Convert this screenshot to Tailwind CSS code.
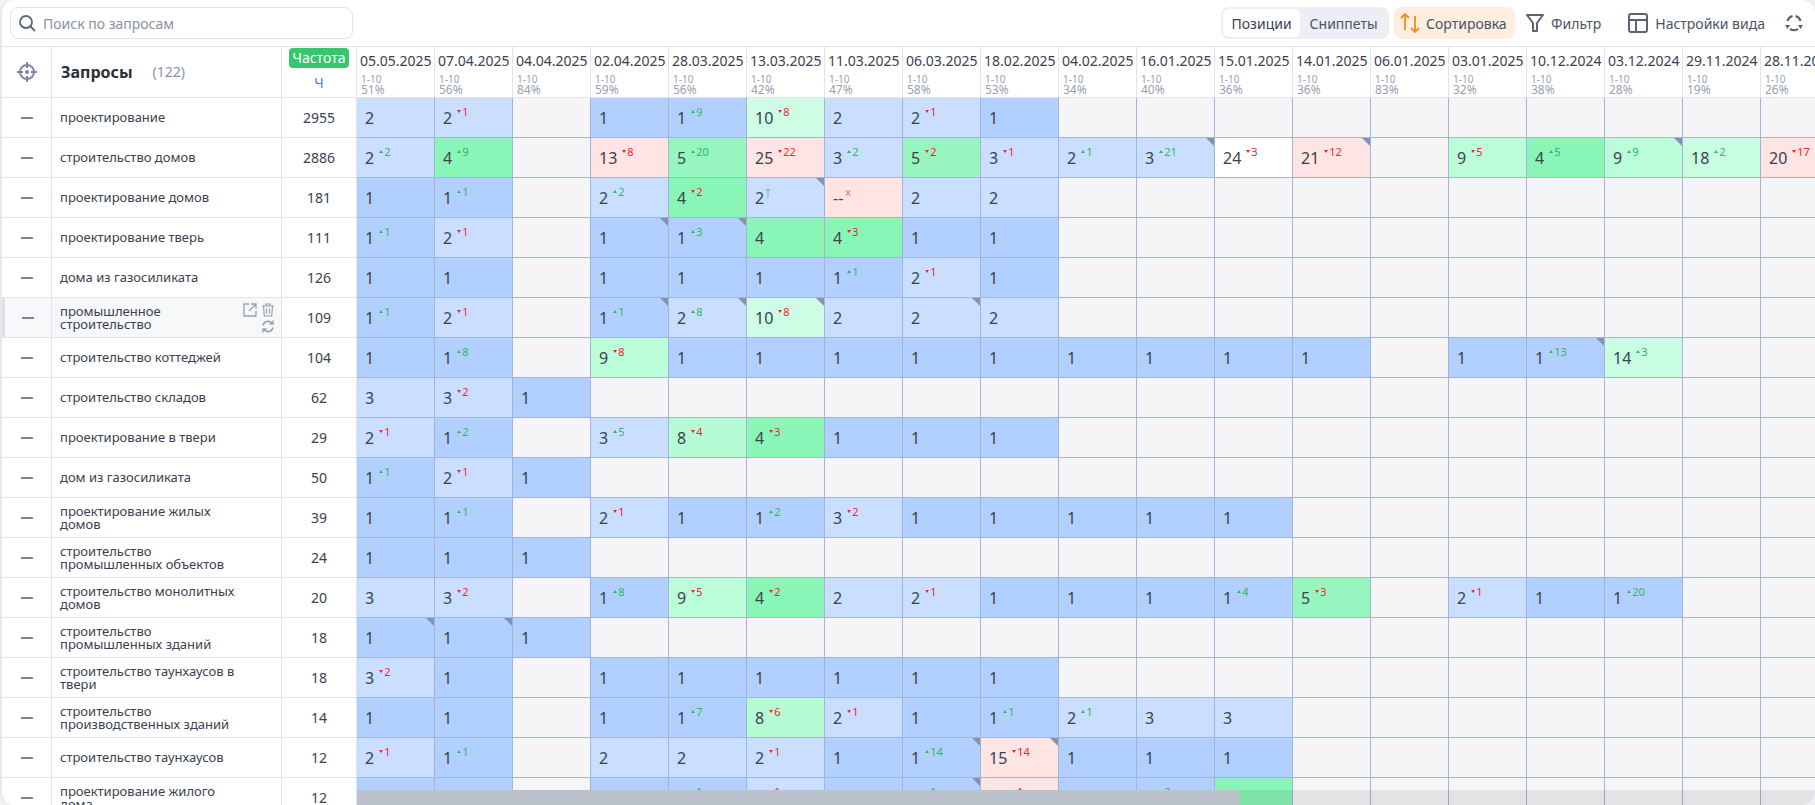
<!DOCTYPE html>
<html lang="ru">
<head>
  <meta charset="UTF-8" />
  <title>Запросы</title>
  <script src="https://cdn.jsdelivr.net/npm/@tailwindcss/browser@4"></script>
</head>
<body class="bg-[#eef0f3] h-[805px] w-[1815px] overflow-hidden font-['Noto_Sans',sans-serif] text-[#3a4150]">
  <div class="relative h-[805px] w-[1815px] overflow-hidden rounded-[14px] bg-white border-l-2 border-[#e6e8ed]">

    <!-- Top bar -->
    <div class="flex h-[46px] items-start pt-[7px] pl-[8px]">
      <div class="flex h-[32px] w-[343px] items-center gap-[6px] rounded-lg border border-[#dfe2e8] px-[7px]">
        <svg width="19" height="19" viewBox="0 0 19 19" fill="none" stroke="#5f6878" stroke-width="1.8"><circle cx="8" cy="8" r="6"/><path d="M12.5 12.5L17 17"/></svg>
        <span class="text-[14px] text-[#8a93a3]">Поиск по запросам</span>
      </div>
      <div class="ml-auto flex items-center pr-[11px]">
        <div class="mr-[1px] flex h-[32px] w-[168px] items-center rounded-lg bg-[#eceef3] p-[2px] text-[14px]">
          <div class="flex h-[28px] w-[77px] items-center justify-center rounded-md bg-white text-[#3a4150]">Позиции</div>
          <div class="flex-1 text-center text-[#4a5363]">Сниппеты</div>
        </div>
        <div class="ml-[4px] flex h-[32px] w-[121px] items-center gap-[6px] rounded-lg bg-[#fdeee0] pl-[6px] text-[14px] text-[#4a5363]">
          <svg width="20" height="22" viewBox="0 0 20 22" fill="none" stroke="#f58a1f" stroke-width="1.8"><path d="M5 18V2M1 6l4-4 4 4"/><path d="M15 4v16M11 16l4 4 4-4"/></svg>
          <span>Сортировка</span>
        </div>
        <div class="ml-[11px] flex items-center gap-[7px] text-[14px] text-[#4a5363]">
          <svg width="18" height="20" viewBox="0 0 18 20" fill="none" stroke="#5a6475" stroke-width="2" stroke-linejoin="round"><path d="M1 2h16l-6 8v8H7v-8z"/></svg>
          <span>Фильтр</span>
        </div>
        <div class="ml-[27px] flex items-center gap-[7px] text-[14px] text-[#4a5363]">
          <svg width="20" height="22" viewBox="0 0 20 22" fill="none" stroke="#5a6475" stroke-width="2"><rect x="1" y="2" width="18" height="18" rx="2"/><path d="M1 8h18M8 8v12"/></svg>
          <span>Настройки вида</span>
        </div>
        <svg class="ml-[19px]" width="20" height="22" viewBox="0 0 20 22" fill="none" stroke="#5a6475" stroke-width="2.2"><path d="M3.500 9A7 7 0 0 1 8.500 4M11.500 4A7 7 0 0 1 16.500 9M6 16.800A7 7 0 0 0 14 16.800"/><path d="M1 13h5l-2.500 4zM19 13h-5l2.500 4z" fill="#5a6475" stroke="none"/></svg>
      </div>
    </div>

    <!-- Table -->
    <div id="table" class="w-[1900px] border-t border-[#e2e4ea]"></div>

    <!-- Horizontal scrollbar -->
    <div class="absolute bottom-0 left-[355px] right-0 h-[15px] bg-black/[0.07]">
      <div class="h-full w-[882px] bg-[#bbc2cc]"></div>
    </div>
  </div>

  <script>
    const dates = ['05.05.2025','07.04.2025','04.04.2025','02.04.2025','28.03.2025','13.03.2025','11.03.2025','06.03.2025','18.02.2025','04.02.2025','16.01.2025','15.01.2025','14.01.2025','06.01.2025','03.01.2025','10.12.2024','03.12.2024','29.11.2024','28.11.2024'];
    const percents = [51,56,84,59,56,42,47,58,53,34,40,36,36,83,32,38,28,19,26];

    // value, then +n / -n for the change, * for the corner mark
    const rows = [
      ['проектирование', 2955, '2 2-1 _ 1 1+9 10-8 2 2-1 1'],
      ['строительство домов', 2886, '2+2 4+9 _ 13-8 5+20 25-22 3+2 5-2 3-1 2+1 3+21* 24-3 21-12* _ 9-5 4+5 9+9* 18+2 20-17'],
      ['проектирование домов', 181, '1 1+1 _ 2+2 4-2 2^* --x 2 2'],
      ['проектирование тверь', 111, '1+1 2-1 _ 1* 1+3* 4 4-3 1 1'],
      ['дома из газосиликата', 126, '1 1 _ 1 1 1 1+1 2-1 1'],
      ['промышленное<br>строительство', 109, '1+1 2-1 _ 1+1* 2+8* 10-8* 2 2* 2'],
      ['строительство коттеджей', 104, '1 1+8 _ 9-8 1 1 1 1 1 1 1 1 1 _ 1 1+13* 14+3'],
      ['строительство складов', 62, '3 3-2 1'],
      ['проектирование в твери', 29, '2-1 1+2 _ 3+5 8-4 4-3 1 1 1'],
      ['дом из газосиликата', 50, '1+1 2-1 1'],
      ['проектирование жилых домов', 39, '1 1+1 _ 2-1 1 1+2 3-2 1 1 1 1 1'],
      ['строительство промышленных объектов', 24, '1 1 1'],
      ['строительство монолитных домов', 20, '3 3-2 _ 1+8 9-5 4-2 2 2-1 1 1 1 1+4 5-3 _ 2-1 1 1+20'],
      ['строительство промышленных зданий', 18, '1* 1* 1'],
      ['строительство таунхаусов в твери', 18, '3-2 1 _ 1 1 1 1 1 1'],
      ['строительство производственных зданий', 14, '1 1 _ 1 1+7 8-6 2-1 1 1+1 2+1 3 3'],
      ['строительство таунхаусов', 12, '2-1 1+1 _ 2 2 2-1 1 1+14* 15-14* 1 1 1'],
      ['проектирование жилого дома', 12, '1 1 _ 1 1+1 2-1 1 1+1* 15-1 1 1+2 4'],
    ];

    const cellBg = {
      '_': 'bg-[#f5f5f7]', '--': 'bg-[#ffe4e4]',
      '1': 'bg-[#b1d0ff]', '2': 'bg-[#cadeff]', '3': 'bg-[#cadeff]',
      '4': 'bg-[#89f5b6]', '5': 'bg-[#97f6c0]', '8': 'bg-[#b5fbd3]', '9': 'bg-[#bbfdd8]',
      '10': 'bg-[#cdfde5]', '14': 'bg-[#c8fde2]', '18': 'bg-[#c8fde2]',
      '13': 'bg-[#ffe4e4]', '15': 'bg-[#ffe4e4]', '20': 'bg-[#ffe4e4]', '21': 'bg-[#ffe4e4]', '25': 'bg-[#ffe4e4]',
      '24': 'bg-white',
    };

    function changeMark(sign, n) {
      if (sign === '^') return `<svg class="relative -top-[5px] ml-[1px]" width="6" height="10" viewBox="0 0 6 10" fill="none" stroke="#7cc9a0" stroke-width="1.200"><path d="M3 10V1M.8 3.200L3 1l2.200 2.200"/></svg>`;
      if (sign === 'x') return `<span class="relative -top-[6px] ml-[2px] text-[11px] leading-none text-[#f87171]">x</span>`;
      if (sign === '+') return `<span class="relative -top-[6px] ml-[5px] flex items-center gap-[1px] text-[11px] leading-none text-[#2fb85f]"><i class="block h-0 w-0 border-x-[2px] border-b-[3px] border-x-transparent border-b-[#2fb85f]"></i>${n}</span>`;
      return `<span class="relative -top-[6px] ml-[5px] flex items-center gap-[1px] text-[11px] leading-none text-[#f5222d]"><i class="block h-0 w-0 border-x-[2px] border-t-[3px] border-x-transparent border-t-[#f5222d]"></i>${n}</span>`;
    }

    function renderCell(token) {
      const corner = token.endsWith('*');
      const m = token.replace('*', '').match(/^(--|\d+|_)([+\-^x]?)(\d*)$/);
      const value = m[1];
      const corn = corner ? `<div class="absolute right-0 top-0 h-[8px] w-[8px] bg-[#8392ad] [clip-path:polygon(0_0,100%_0,100%_100%)]"></div>` : '';
      const text = value === '_' ? '' : `<span>${value}</span>${m[2] ? changeMark(m[2], m[3]) : ''}`;
      return `<div class="relative flex h-[40px] w-[78px] shrink-0 items-center border-b border-r border-[#a3b5d6] pl-[8px] text-[16px] text-[#3a4150] ${cellBg[value]}">${text}${corn}</div>`;
    }

    let html = `
      <div class="flex h-[51px]">
        <div class="flex w-[50px] shrink-0 items-center justify-center border-b border-r border-[#e2e4ea]">
          <svg width="22" height="22" viewBox="0 0 22 22" fill="none" stroke="#7f8aa0" stroke-width="2"><circle cx="11" cy="11" r="7"/><path d="M11 1v6M11 15v6M1 11h6M15 11h6"/><circle cx="11" cy="11" r="1" fill="#7f8aa0"/></svg>
        </div>
        <div class="flex w-[230px] shrink-0 items-center border-b border-r border-[#e2e4ea] pb-[1px] pl-[9px]">
          <span class="text-[16px] font-bold text-[#2b2f38]">Запросы</span>
          <span class="ml-[20px] text-[14px] text-[#8a93a8]">(122)</span>
        </div>
        <div class="flex w-[75px] shrink-0 flex-col items-center border-b border-r border-[#e2e4ea] pt-[1px]">
          <span class="h-[20px] rounded-[4px] bg-[#35c76e] px-[4px] text-[14px] leading-[20px] text-white">Частота</span>
          <span class="mt-[5px] text-[14px] leading-[20px] text-[#3b82f6]">Ч</span>
        </div>`;
    dates.forEach((d, i) => {
      html += `
        <div class="w-[78px] shrink-0 border-b border-r border-[#e2e4ea] pl-[3px] pt-[4px]">
          <div class="text-[14px] leading-[20px] text-[#3a4150]">${d}</div>
          <div class="mt-[3px] pl-[1px] text-[10px] leading-[10px] text-[#9aa1ae]">1-10</div>
          <div class="pl-[1px] text-[12px] leading-[11px] text-[#9aa1ae]">${percents[i]}%</div>
        </div>`;
    });
    html += `</div>`;

    rows.forEach(([name, freq, cells], r) => {
      const tokens = cells.split(' ');
      while (tokens.length < dates.length) tokens.push('_');
      const hovered = r === 5;
      const actions = hovered ? `
        <div class="absolute right-[6px] top-[5px] flex w-[32px] flex-wrap justify-end gap-x-[4px] gap-y-[3px]">
          <svg width="14" height="14" viewBox="0 0 14 14" fill="none" stroke="#9aa1ad" stroke-width="1.300"><path d="M6 1H1v12h12V8M8 1h5v5M13 1L6 8"/></svg>
          <svg width="14" height="14" viewBox="0 0 14 14" fill="none" stroke="#9aa1ad" stroke-width="1.200"><path d="M1 3h12M5 3V1h4v2M2.500 3l.8 10h7.400l.8-10M5.500 5.500v5M8.500 5.500v5"/></svg>
          <svg width="14" height="13" viewBox="0 0 14 13" fill="none" stroke="#9aa1ad" stroke-width="1.500"><path d="M2 5.500A5 5 0 0 1 11 3.500M12 7.500A5 5 0 0 1 3 9.500"/><path d="M12 0.500v3.500H8.500M2 12.500V9h3.500"/></svg>
        </div>` : '';
      html += `
      <div class="flex h-[40px]">
        <div class="flex w-[50px] shrink-0 items-center justify-center border-b border-r border-[#e2e4ea] ${hovered ? 'bg-[#f7f8fa] border-l-[3px] border-l-[#dfe1e6]' : ''}">
          <div class="h-[2px] w-[12px] bg-[#7b859c]"></div>
        </div>
        <div class="relative flex w-[230px] shrink-0 items-center border-b border-r border-[#e2e4ea] pl-[8px] ${hovered ? 'bg-[#f7f8fa]' : ''}">
          <span class="max-w-[185px] text-[13px] leading-[13px] text-[#3a4150]">${name}</span>${actions}
        </div>
        <div class="flex w-[75px] shrink-0 items-center justify-center border-b border-r border-[#e2e4ea] text-[14px] text-[#3a4150]">${freq}</div>
        ${tokens.map(renderCell).join('')}
      </div>`;
    });
    document.getElementById('table').innerHTML = html;
  </script>
</body>
</html>
